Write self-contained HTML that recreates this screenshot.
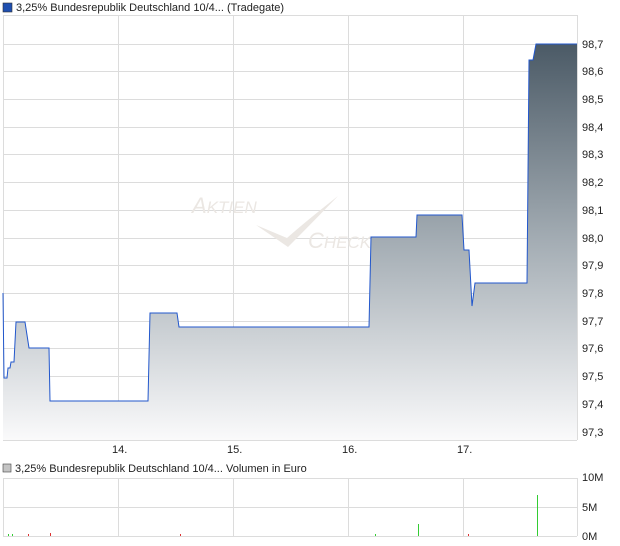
<!DOCTYPE html>
<html><head><style>
body{margin:0;background:#fff;width:620px;height:546px;overflow:hidden;font-family:"Liberation Sans",sans-serif;}
svg{position:absolute;left:0;top:0}
text{font-family:"Liberation Sans",sans-serif;font-size:11px;fill:#222}
</style></head><body>
<svg width="620" height="546" viewBox="0 0 620 546">
<defs><linearGradient id="g" x1="0" y1="44" x2="0" y2="440" gradientUnits="userSpaceOnUse">
<stop offset="0" stop-color="#4b5a66"/><stop offset="0.5" stop-color="#a4adb4"/><stop offset="1" stop-color="#fafafb"/></linearGradient></defs>
<rect x="3" y="3" width="9" height="9" fill="#1f4fb0" stroke="#333" stroke-width="0.6"/>
<text x="16" y="11">3,25% Bundesrepublik Deutschland 10/4... (Tradegate)</text>
<g stroke="#dcdcdc" stroke-width="1">
<line x1="3" y1="15.5" x2="577" y2="15.5"/>
<line x1="3" y1="44.5" x2="577" y2="44.5"/><line x1="3" y1="71.5" x2="577" y2="71.5"/><line x1="3" y1="99.5" x2="577" y2="99.5"/><line x1="3" y1="127.5" x2="577" y2="127.5"/><line x1="3" y1="154.5" x2="577" y2="154.5"/><line x1="3" y1="182.5" x2="577" y2="182.5"/><line x1="3" y1="210.5" x2="577" y2="210.5"/><line x1="3" y1="238.5" x2="577" y2="238.5"/><line x1="3" y1="265.5" x2="577" y2="265.5"/><line x1="3" y1="293.5" x2="577" y2="293.5"/><line x1="3" y1="321.5" x2="577" y2="321.5"/><line x1="3" y1="348.5" x2="577" y2="348.5"/><line x1="3" y1="376.5" x2="577" y2="376.5"/><line x1="3" y1="404.5" x2="577" y2="404.5"/><line x1="3" y1="432.5" x2="577" y2="432.5"/>
<line x1="3.5" y1="15" x2="3.5" y2="440"/><line x1="118.5" y1="15" x2="118.5" y2="440"/><line x1="233.5" y1="15" x2="233.5" y2="440"/><line x1="348.5" y1="15" x2="348.5" y2="440"/><line x1="463.5" y1="15" x2="463.5" y2="440"/><line x1="577.5" y1="15" x2="577.5" y2="440"/>
<line x1="3" y1="440.5" x2="577" y2="440.5"/>
</g>
<text x="192" y="213" style="font-size:22px;fill:#ebe7e3;font-style:italic">A<tspan style="font-size:17px">KTIEN</tspan></text>
<text x="308" y="248" style="font-size:22px;fill:#ebe7e3;font-style:italic">C<tspan style="font-size:17px">HECK</tspan></text>
<path d="M256,225 L275,238 L288,247 Q310,225 338,196 Q305,222 287,238 Z" fill="#ebe7e3"/>
<path d="M3,440 L3,293 L4,378 L7,378 L8,368 L10,368 L11,362 L14,362 L16,322 L25,322 L27,335 L29,348 L49,348 L50,401 L148,401 L150,313 L177,313 L179,327 L369,327 L371,237 L416,237 L417,215 L462,215 L464,250 L469,250 L472,306 L475,283 L527,283 L528,172 L529,60 L533,60 L536,44 L577,44 L577,440 Z" fill="url(#g)"/>
<path d="M3,293 L4,378 L7,378 L8,368 L10,368 L11,362 L14,362 L16,322 L25,322 L27,335 L29,348 L49,348 L50,401 L148,401 L150,313 L177,313 L179,327 L369,327 L371,237 L416,237 L417,215 L462,215 L464,250 L469,250 L472,306 L475,283 L527,283 L528,172 L529,60 L533,60 L536,44 L577,44" fill="none" stroke="#2257cc" stroke-width="1"/>
<g>
<text x="582" y="48">98,7</text><text x="582" y="75">98,6</text><text x="582" y="103">98,5</text><text x="582" y="131">98,4</text><text x="582" y="158">98,3</text><text x="582" y="186">98,2</text><text x="582" y="214">98,1</text><text x="582" y="242">98,0</text><text x="582" y="269">97,9</text><text x="582" y="297">97,8</text><text x="582" y="325">97,7</text><text x="582" y="352">97,6</text><text x="582" y="380">97,5</text><text x="582" y="408">97,4</text><text x="582" y="436">97,3</text>
<text x="112" y="453">14.</text><text x="227" y="453">15.</text><text x="342" y="453">16.</text><text x="457" y="453">17.</text>
</g>
<rect x="3" y="464" width="8" height="8" fill="#c4c4c4" stroke="#444" stroke-width="0.6"/>
<text x="15" y="472">3,25% Bundesrepublik Deutschland 10/4... Volumen in Euro</text>
<g stroke="#dcdcdc">
<line x1="3" y1="478.5" x2="577" y2="478.5"/><line x1="3" y1="507.5" x2="577" y2="507.5"/><line x1="3" y1="536.5" x2="577" y2="536.5"/>
<line x1="3.5" y1="478" x2="3.5" y2="536"/><line x1="118.5" y1="478" x2="118.5" y2="536"/><line x1="233.5" y1="478" x2="233.5" y2="536"/><line x1="348.5" y1="478" x2="348.5" y2="536"/><line x1="463.5" y1="478" x2="463.5" y2="536"/><line x1="577.5" y1="478" x2="577.5" y2="536"/>
</g>
<g stroke-width="1">
<line x1="537.5" y1="495" x2="537.5" y2="536" stroke="#33cc33"/>
<line x1="418.5" y1="524" x2="418.5" y2="536" stroke="#33cc33"/>
<line x1="50.5" y1="533" x2="50.5" y2="536" stroke="#dd3333"/>
<line x1="180.5" y1="534" x2="180.5" y2="536" stroke="#dd3333"/>
<line x1="8.5" y1="534" x2="8.5" y2="536" stroke="#33cc33"/>
<line x1="12.5" y1="534" x2="12.5" y2="536" stroke="#33cc33"/>
<line x1="28.5" y1="534" x2="28.5" y2="536" stroke="#dd3333"/>
<line x1="468.5" y1="534" x2="468.5" y2="536" stroke="#dd3333"/>
<line x1="375.5" y1="534" x2="375.5" y2="536" stroke="#33cc33"/>
</g>
<text x="582" y="481">10M</text><text x="582" y="511">5M</text><text x="582" y="540">0M</text>
</svg>
</body></html>
